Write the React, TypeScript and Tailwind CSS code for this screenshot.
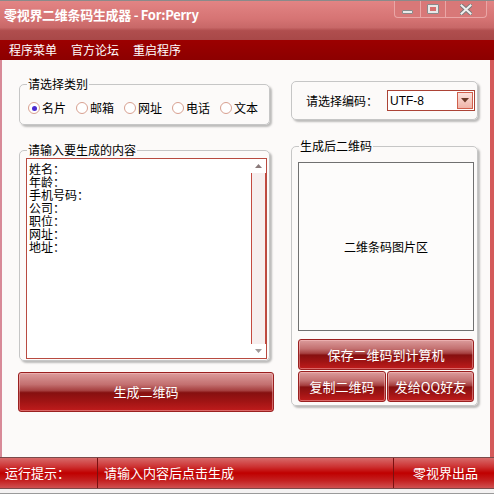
const radios = ["名片", "邮箱", "网址", "电话", "文本"];
const fields = ["姓名：", "年龄：", "手机号码：", "公司：", "职位：", "网址：", "地址："];

const redBtn =
  "border border-[#9a2020] rounded-[3px] shadow-[inset_0_0_0_1px_rgba(255,200,200,0.45)] bg-[linear-gradient(to_bottom,#dc9c9c_0%,#c37070_30%,#a64040_46%,#861010_52%,#a01414_75%,#c01c1c_100%)] text-white text-[13px] flex items-center justify-center";

function Radio({ label, checked }: { label: string; checked?: boolean }) {
  return (
    <label className="flex items-center gap-[2px] w-[48px]">
      <span className="w-[12px] h-[12px] rounded-full border border-[#d8a090] bg-white flex items-center justify-center">
        {checked && <span className="w-[5px] h-[5px] rounded-full bg-[#4a2ad0]" />}
      </span>
      <span>{label}</span>
    </label>
  );
}

export default function App() {
  return (
    <div className="w-[494px] h-[494px] flex flex-col overflow-hidden bg-[#fcfaf9] text-[12px] leading-[14px] text-black font-['Noto_Sans_CJK_SC',sans-serif]">
      {/* title bar */}
      <div className="h-[40px] flex items-start justify-between border-t border-[#8a8a8a] bg-[linear-gradient(to_bottom,#e28484_0%,#d67474_45%,#c86868_68%,#b04e4e_76%,#a84848_100%)]">
        <div className="pl-[4px] pt-[6px] text-white font-bold text-[13px] leading-[16px] tracking-[-0.3px]">
          零视界二维条码生成器 - For:Perry
        </div>
        <div className="mr-[7px] flex h-[17px] border border-t-0 border-[#eaa6a6] rounded-b-[4px] bg-[#d87878]">
          <div className="w-[26px] flex items-center justify-center border-r border-[#eaa6a6]">
            <span className="mt-[6px] w-[11px] h-[4px] bg-[#e8e8e8] border border-[#8a8a8a] rounded-[1px]" />
          </div>
          <div className="w-[25px] flex items-center justify-center border-r border-[#eaa6a6]">
            <span className="w-[12px] h-[10px] bg-[#e8e8e8] border border-[#8a8a8a] rounded-[1px] flex items-center justify-center">
              <span className="w-[6px] h-[4px] bg-[#d87070]" />
            </span>
          </div>
          <div className="w-[40px] flex items-center justify-center">
            <svg width="12" height="11" viewBox="0 0 12 11">
              <path d="M1.5 1.5 L10.5 9.5 M10.5 1.5 L1.5 9.5" stroke="#7a7a7a" strokeWidth="4" strokeLinecap="square" />
              <path d="M1.5 1.5 L10.5 9.5 M10.5 1.5 L1.5 9.5" stroke="#f0f0f0" strokeWidth="2" strokeLinecap="square" />
            </svg>
          </div>
        </div>
      </div>

      {/* menu bar */}
      <div className="h-[20px] flex items-center gap-[14px] pl-[9px] bg-[linear-gradient(to_bottom,#9c0000,#8c0000)] text-white text-[12px]">
        <span>程序菜单</span>
        <span>官方论坛</span>
        <span>重启程序</span>
      </div>

      {/* body */}
      <div className="flex-1 flex border-l-2 border-r-[4px] border-l-[#d88a98] border-r-[#d45a5a] pl-[17px]">
        {/* left column */}
        <div className="w-[256px] flex flex-col pt-[17px]">
          <fieldset className="border border-[#c6c6c6] rounded-[5px] pl-[8px] pr-0 pt-[10px] pb-[9px] shadow-[2px_2px_2px_rgba(0,0,0,0.25)] w-[251px]">
            <legend className="px-[1px] -ml-[1px]">请选择类别</legend>
            <div className="flex">
              {radios.map((r, i) => (
                <Radio key={r} label={r} checked={i === 0} />
              ))}
            </div>
          </fieldset>

          <fieldset className="mt-[18px] border border-[#c6c6c6] rounded-[5px] pl-[6px] pr-[2px] pt-[1px] pb-[1px] shadow-[2px_2px_2px_rgba(0,0,0,0.25)] w-[251px]">
            <legend className="px-[1px] ml-[1px]">请输入要生成的内容</legend>
            <div className="h-[201px] border border-[#b84a40] bg-white flex">
              <div className="flex-1 pl-[2px] pt-[3px] leading-[13px]">
                {fields.map((f) => (
                  <div key={f} className="h-[13px]">{f}</div>
                ))}
              </div>
              <div className="w-[16px] flex flex-col items-center">
                <svg width="9" height="14" viewBox="0 0 9 14" className="shrink-0">
                  <path d="M1 9 L4.5 5 L8 9 Z" fill="#8a7a7a" />
                </svg>
                <div className="flex-1 w-[15px] border-x border-[#c44a40] bg-[#f6eeee]" />
                <svg width="9" height="14" viewBox="0 0 9 14" className="shrink-0">
                  <path d="M1 5 L4.5 9 L8 5 Z" fill="#a09a9a" />
                </svg>
              </div>
            </div>
          </fieldset>

          <button className={`${redBtn} mt-[11px] -ml-[1px] w-[256px] h-[40px]`}>生成二维码</button>
        </div>

        {/* right column */}
        <div className="ml-[16px] w-[187px] flex flex-col pt-[21px]">
          <div className="h-[39px] border border-[#c6c6c6] rounded-[5px] shadow-[2px_2px_2px_rgba(0,0,0,0.25)] flex items-center pl-[14px]">
            <span className="mr-[9px]">请选择编码：</span>
            <div className="w-[88px] h-[21px] border-[1.5px] border-[#ac4336] bg-white flex items-center justify-between">
              <span className="pl-[2px] text-[12px] font-['Liberation_Sans',sans-serif]">UTF-8</span>
              <span className="w-[16px] h-[17px] mr-[1px] border border-[#d0604c] bg-[linear-gradient(to_bottom,#fbe2dc,#f0b4a8)] flex items-center justify-center">
                <svg width="8" height="5" viewBox="0 0 8 5">
                  <path d="M0 0 H8 L4 4.5 Z" fill="#6a3a28" />
                </svg>
              </span>
            </div>
          </div>

          <fieldset className="mt-[19px] border border-[#c6c6c6] rounded-[5px] pl-[6px] pr-[3px] pt-[9px] pb-[3px] shadow-[2px_2px_2px_rgba(0,0,0,0.25)]">
            <legend className="px-[1px] ml-[1px]">生成后二维码</legend>
            <div className="h-[169px] border border-[#707070] bg-[#fdfcfb] flex items-center justify-center">
              二维条码图片区
            </div>
            <button className={`${redBtn} mt-[8px] w-full h-[31px]`}>保存二维码到计算机</button>
            <div className="mt-[1px] flex gap-[1px]">
              <button className={`${redBtn} w-[88px] h-[31px]`}>复制二维码</button>
              <button className={`${redBtn} flex-1 h-[31px]`}>发给QQ好友</button>
            </div>
          </fieldset>
        </div>
      </div>

      {/* status bar */}
      <div className="h-[32px] flex items-stretch border-y border-[#7a4a4a] bg-[linear-gradient(to_bottom,#d86a6a_0%,#cc3030_30%,#c00000_50%,#c42020_75%,#d05050_100%)] text-white text-[13px]">
        <div className="w-[98px] pl-[5px] flex items-center border-r border-[#7a1010]">运行提示：</div>
        <div className="flex-1 pl-[6px] flex items-center border-r border-[#7a1010]">请输入内容后点击生成</div>
        <div className="w-[100px] pl-[19px] flex items-center">零视界出品</div>
      </div>
      <div className="h-[5px] bg-[#f4f2f2] border-b border-[#9a9a9a]" />
    </div>
  );
}
